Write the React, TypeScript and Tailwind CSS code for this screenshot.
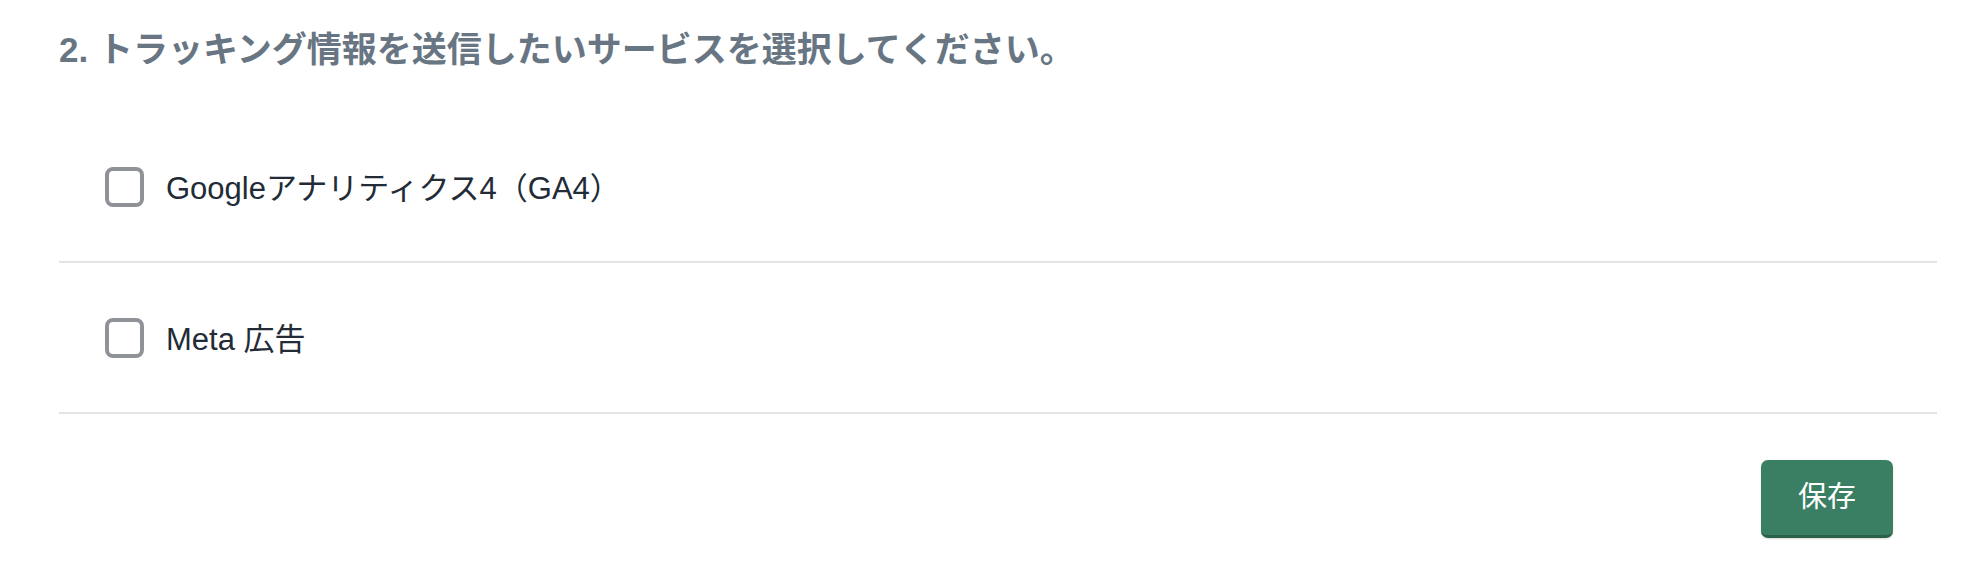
import { useState } from "react";

const services = [
    { id: "ga4", label: "Googleアナリティクス4（GA4）" },
    { id: "meta", label: "Meta 広告" },
];

export default function App() {
    const [selected, setSelected] = useState<Record<string, boolean>>({});

    return (
        <div className="bg-white w-full h-[574px] pl-[59px] pr-[37px] pt-[25px] font-['Liberation_Sans','Noto_Sans_CJK_JP',sans-serif]">
            {/* Section heading */}
            <h2 className="text-[35px] leading-[50px] font-bold text-[#687583]">
                2. トラッキング情報を送信したいサービスを選択してください。
            </h2>

            {/* Service list */}
            <div className="mt-[37px]">
                {services.map((s) => (
                    <label
                        key={s.id}
                        className="h-[151px] flex items-center gap-[22px] pl-[46px] border-b-2 border-[#e4e4e4] cursor-pointer"
                    >
                        <input
                            type="checkbox"
                            checked={!!selected[s.id]}
                            onChange={() => setSelected((p) => ({ ...p, [s.id]: !p[s.id] }))}
                            className="appearance-none shrink-0 w-[39px] h-[40px] rounded-[8px] border-4 border-[#8f9296] bg-white checked:bg-[#3a7f63] checked:border-[#3a7f63]"
                        />
                        <span className="text-[31px] leading-[40px] pt-[4px] text-[#222b36]">{s.label}</span>
                    </label>
                ))}
            </div>

            {/* Actions */}
            <div className="flex justify-end pr-[44px] mt-[46px]">
                <button className="w-[132px] h-[78px] rounded-[7px] bg-[#3a7f63] border-b-[3px] border-[#2c6149] text-white text-[29px] shadow-[0_1px_2px_rgba(0,0,0,0.15)]">
                    保存
                </button>
            </div>
        </div>
    );
}
